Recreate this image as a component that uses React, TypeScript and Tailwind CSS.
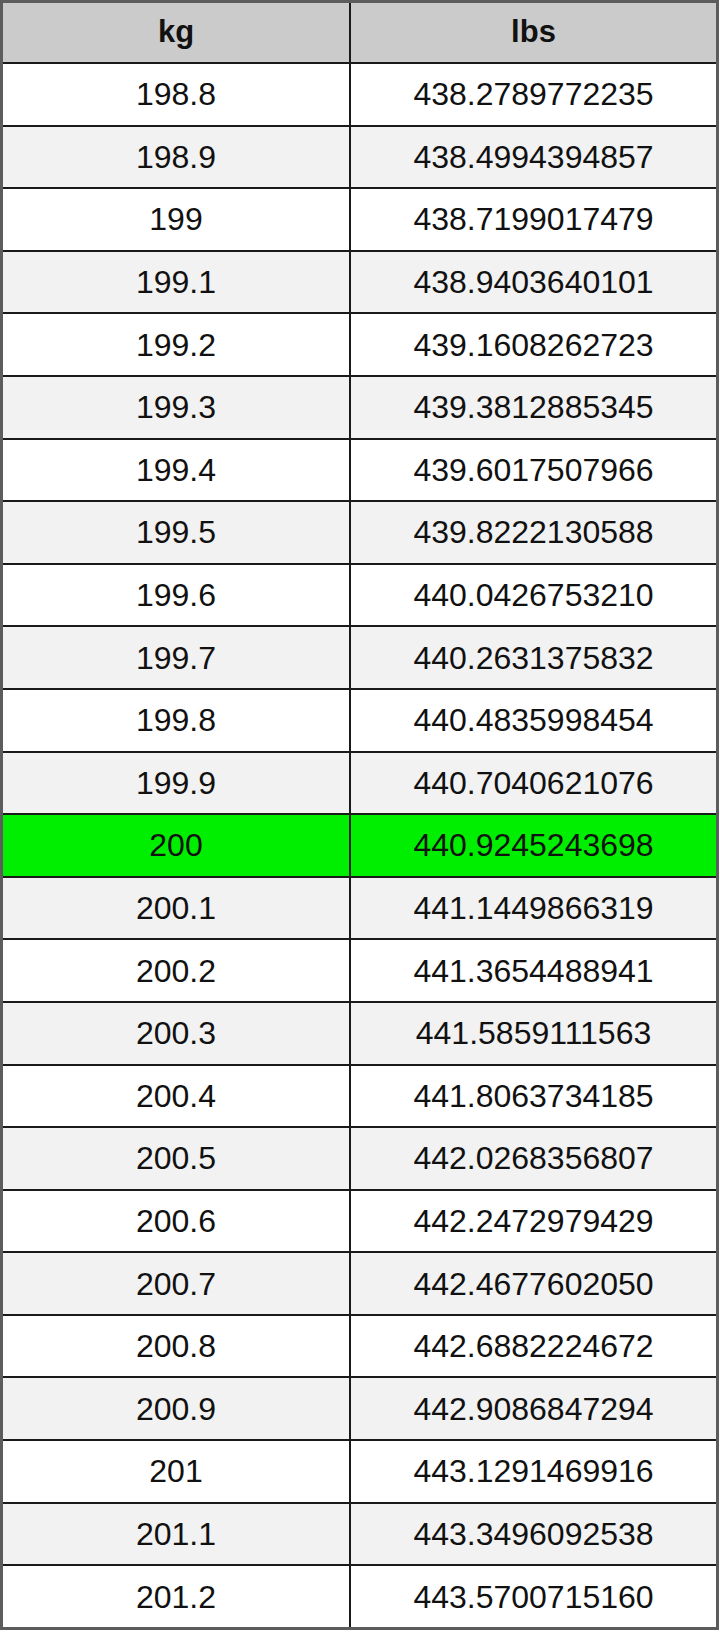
import React from 'react';

const rows: [string, string][] = [
  ['198.8', '438.2789772235'],
  ['198.9', '438.4994394857'],
  ['199', '438.7199017479'],
  ['199.1', '438.9403640101'],
  ['199.2', '439.1608262723'],
  ['199.3', '439.3812885345'],
  ['199.4', '439.6017507966'],
  ['199.5', '439.8222130588'],
  ['199.6', '440.0426753210'],
  ['199.7', '440.2631375832'],
  ['199.8', '440.4835998454'],
  ['199.9', '440.7040621076'],
  ['200', '440.9245243698'],
  ['200.1', '441.1449866319'],
  ['200.2', '441.3654488941'],
  ['200.3', '441.5859111563'],
  ['200.4', '441.8063734185'],
  ['200.5', '442.0268356807'],
  ['200.6', '442.2472979429'],
  ['200.7', '442.4677602050'],
  ['200.8', '442.6882224672'],
  ['200.9', '442.9086847294'],
  ['201', '443.1291469916'],
  ['201.1', '443.3496092538'],
  ['201.2', '443.5700715160'],
];

export default function App() {
  return (
    <div className="bg-white w-[720px] h-[1635px] font-['Liberation_Sans',Arial,sans-serif] text-[#111]">
      <div className="w-[719px] border-[3px] border-[#5c5c5c]">
        {/* header */}
        <div className="grid grid-cols-[346px_1fr] h-[61px] border-b-2 border-[#1a1a1a] bg-[#cbcbcb]">
          <div className="flex items-center justify-center text-[31px] font-bold">kg</div>
          <div className="flex items-center justify-center text-[31px] font-bold border-l-2 border-[#1a1a1a]">
            lbs
          </div>
        </div>
        {rows.map(([kg, lbs], i) => {
          const isTarget = kg === '200';
          const bg = isTarget ? 'bg-[#00ee00]' : i % 2 === 0 ? 'bg-white' : 'bg-[#f2f2f2]';
          const last = i === rows.length - 1;
          return (
            <div
              key={kg}
              className={`grid grid-cols-[346px_1fr] ${bg} ${last ? 'h-[60.6px]' : 'h-[62.6px] border-b-2 border-[#1a1a1a]'}`}
            >
              <div className="flex items-center justify-center text-[32px]">{kg}</div>
              <div className="flex items-center justify-center text-[32px] border-l-2 border-[#1a1a1a]">
                {lbs}
              </div>
            </div>
          );
        })}
      </div>
    </div>
  );
}
